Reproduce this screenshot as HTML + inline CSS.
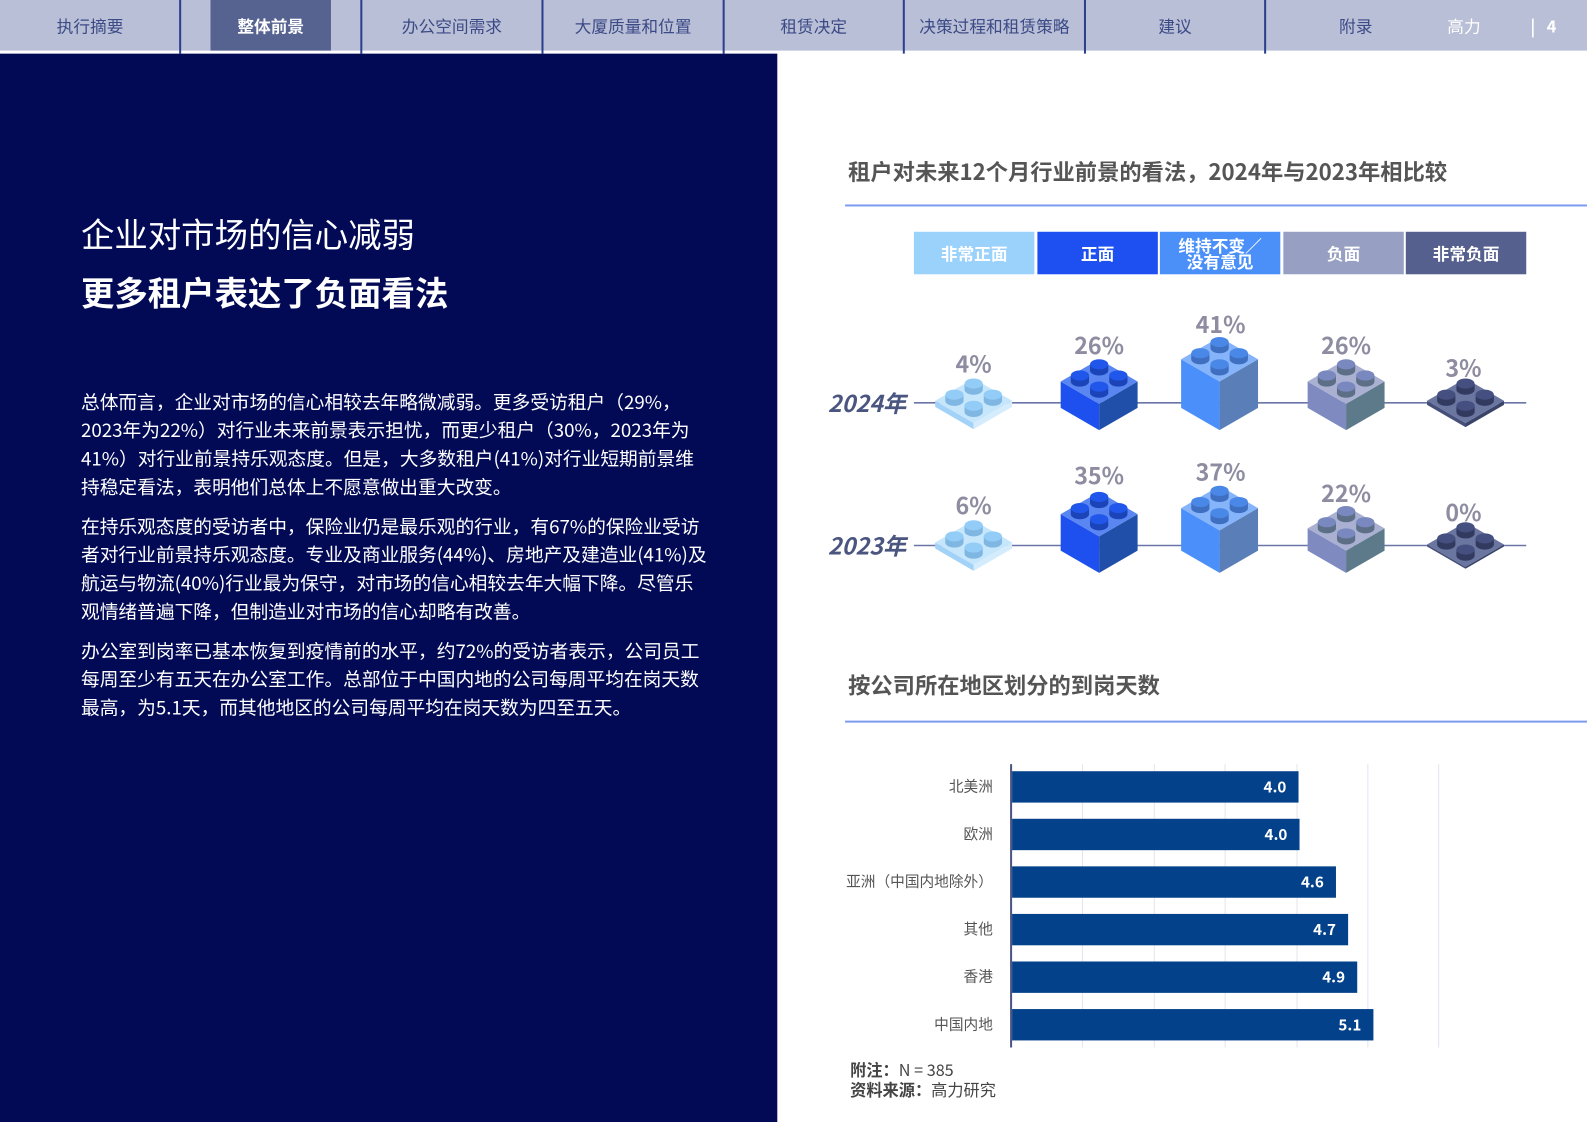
<!DOCTYPE html>
<html><head><meta charset="utf-8"><style>
*{margin:0;padding:0;box-sizing:border-box}
html,body{width:1587px;height:1122px;overflow:hidden;background:#fff}
#w{position:absolute;left:0;top:0;width:1568px;height:1109px;transform:scale(1.0121);transform-origin:0 0;font-family:"Noto Sans CJK SC","Liberation Sans",sans-serif}
.nav{position:absolute;left:0;top:0;width:1568px;height:50px;background:#b9bfd6}
.tab{position:absolute;top:0;height:50px;line-height:50px;text-align:center;font-size:16.5px;color:#3c4a86}
.div{position:absolute;top:0;width:2px;height:53px;background:#2c3f8f}
.left{position:absolute;left:0;top:53px;width:768px;height:1056px;background:#020a55;color:#fff}
.abs{position:absolute;white-space:nowrap}
.p{position:absolute;left:80px;font-size:18.5px;line-height:28px;color:#fff;white-space:nowrap}
.leg{position:absolute;top:229px;height:42px;width:119px;color:#fff;font-weight:bold;font-size:16.5px;text-align:center;display:flex;align-items:center;justify-content:center;line-height:16px}
.bar{position:absolute;left:1000px;height:31px;background:#03418a;color:#fff;font-weight:bold;font-size:15px;text-align:right;padding-right:12px;line-height:31px}
.lab{position:absolute;right:587px;font-size:14.5px;color:#555;white-space:nowrap;line-height:20px}
.grid{position:absolute;top:755px;width:1px;height:280px;background:#e2e4ee}
.pct{position:absolute;font-size:23px;font-weight:bold;color:#8e8ca0;transform:translateX(-50%);line-height:28px}
</style></head><body><div id="w">
<div class="nav"></div>
<div class="tab" style="left:0;width:178px">执行摘要</div>
<div class="tab" style="left:208px;width:119px;background:#566390;color:#fff;font-weight:bold">整体前景</div>
<div class="tab" style="left:357px;width:179px">办公空间需求</div>
<div class="tab" style="left:536px;width:179px">大厦质量和位置</div>
<div class="tab" style="left:715px;width:178px">租赁决定</div>
<div class="tab" style="left:893px;width:179px">决策过程和租赁策略</div>
<div class="tab" style="left:1072px;width:178px">建议</div>
<div class="tab" style="left:1250px;width:179px">附录</div>
<div class="tab" style="left:1424px;width:45px;color:#fff">高力</div>
<div class="tab" style="left:1505px;width:40px;color:#fff;font-weight:bold">|&nbsp;&nbsp;&nbsp;4</div>
<div class="div" style="left:177px"></div><div class="div" style="left:356px"></div><div class="div" style="left:535px"></div><div class="div" style="left:714px"></div><div class="div" style="left:892px"></div><div class="div" style="left:1071px"></div><div class="div" style="left:1249px"></div>

<div class="left">
<div class="abs" style="left:80px;top:155px;font-size:33px;line-height:44px">企业对市场的信心减弱</div>
<div class="abs" style="left:80px;top:213px;font-size:33px;line-height:44px;font-weight:bold">更多租户表达了负面看法</div>
</div>
<div class="p" style="top:383px">总体而言，企业对市场的信心相较去年略微减弱。更多受访租户（29%，<br>2023年为22%）对行业未来前景表示担忧，而更少租户（30%，2023年为<br>41%）对行业前景持乐观态度。但是，大多数租户(41%)对行业短期前景维<br>持稳定看法，表明他们总体上不愿意做出重大改变。</div>
<div class="p" style="top:506px">在持乐观态度的受访者中，保险业仍是最乐观的行业，有67%的保险业受访<br>者对行业前景持乐观态度。专业及商业服务(44%)、房地产及建造业(41%)及<br>航运与物流(40%)行业最为保守，对市场的信心相较去年大幅下降。尽管乐<br>观情绪普遍下降，但制造业对市场的信心却略有改善。</div>
<div class="p" style="top:629px">办公室到岗率已基本恢复到疫情前的水平，约72%的受访者表示，公司员工<br>每周至少有五天在办公室工作。总部位于中国内地的公司每周平均在岗天数<br>最高，为5.1天，而其他地区的公司每周平均在岗天数为四至五天。</div>

<div class="abs" style="left:838px;top:154px;font-size:22px;font-weight:bold;color:#555;line-height:30px">租户对未来12个月行业前景的看法，2024年与2023年相比较</div>
<div class="abs" style="left:835px;top:202px;width:733px;height:2px;background:#7c9cf0"></div>
<div class="leg" style="left:903px;background:#9bd2fc">非常正面</div>
<div class="leg" style="left:1025px;background:#1e4ff0">正面</div>
<div class="leg" style="left:1146px;background:#4b90f9">维持不变／<br>没有意见</div>
<div class="leg" style="left:1268px;background:#97a0c2">负面</div>
<div class="leg" style="left:1389px;background:#56608e">非常负面</div>

<div class="abs" style="left:818px;top:382px;font-size:23px;font-style:italic;font-weight:bold;color:#4a5580;line-height:30px">2024年</div>
<div class="abs" style="left:818px;top:523px;font-size:23px;font-style:italic;font-weight:bold;color:#4a5580;line-height:30px">2023年</div>

<svg class="abs" style="left:0;top:0" width="1568" height="1109">
<line x1="903" y1="398" x2="1508" y2="398" stroke="#6a76a8" stroke-width="1.5"/>
<line x1="903" y1="539" x2="1508" y2="539" stroke="#6a76a8" stroke-width="1.5"/>
</svg>
<svg class="abs" style="left:0;top:0" width="1568" height="1109" id="b"></svg>
<script>
var B=document.getElementById('b'),out='';
function brick(cx,cy,h,t,l,r,s,sd){
 var w=38,d=22;
 out+='<polygon points="'+(cx-w)+','+cy+' '+cx+','+(cy+d)+' '+cx+','+(cy+d+h)+' '+(cx-w)+','+(cy+h)+'" fill="'+l+'"/>';
 out+='<polygon points="'+cx+','+(cy+d)+' '+(cx+w)+','+cy+' '+(cx+w)+','+(cy+h)+' '+cx+','+(cy+d+h)+'" fill="'+r+'"/>';
 out+='<polygon points="'+cx+','+(cy-d)+' '+(cx+w)+','+cy+' '+cx+','+(cy+d)+' '+(cx-w)+','+cy+'" fill="'+t+'"/>';
 [[0,-11],[-19,0],[19,0],[0,11]].forEach(function(p){
  var x=cx+p[0],y=cy+p[1];
  out+='<rect x="'+(x-9)+'" y="'+(y-6)+'" width="18" height="6" fill="'+sd+'"/>';
  out+='<ellipse cx="'+x+'" cy="'+y+'" rx="9" ry="5" fill="'+sd+'"/>';
  out+='<ellipse cx="'+x+'" cy="'+(y-6)+'" rx="9" ry="5" fill="'+s+'"/>';
 });
}
var C=[['#c6e6fc','#a2d2f7','#d4ecfc','#92ccf7','#7fb6e2'],['#5a86f2','#1e50f0','#1f4fa8','#2156ea','#1a44b8'],['#86b4fb','#4a8ffa','#5a7eb8','#4a88e8','#3f6fc0'],['#a9b0d2','#7f8ac0','#5c7a8a','#7a88c0','#5c6f86'],['#6a76a0','#454f7a','#3a4468','#454f80','#323a60']];
var X=[962,1086,1205,1330,1448];
var r1=[[396,6],[377,26],[355,48],[377,26],[396,4]];
var r2=[[536,6],[508,36],[502,42],[522,22],[538,2]];
[r1,r2].forEach(function(r){r.forEach(function(v,i){var c=C[i];brick(X[i],v[0],v[1],c[0],c[1],c[2],c[3],c[4]);});});
B.innerHTML=out;
</script>
<div class="pct" style="left:962px;top:344px">4%</div>
<div class="pct" style="left:1086px;top:326px">26%</div>
<div class="pct" style="left:1206px;top:305px">41%</div>
<div class="pct" style="left:1330px;top:326px">26%</div>
<div class="pct" style="left:1446px;top:348px">3%</div>
<div class="pct" style="left:962px;top:484px">6%</div>
<div class="pct" style="left:1086px;top:454px">35%</div>
<div class="pct" style="left:1206px;top:451px">37%</div>
<div class="pct" style="left:1330px;top:472px">22%</div>
<div class="pct" style="left:1446px;top:491px">0%</div>

<div class="abs" style="left:838px;top:661px;font-size:22px;font-weight:bold;color:#555;line-height:30px">按公司所在地区划分的到岗天数</div>
<div class="abs" style="left:835px;top:712px;width:733px;height:2px;background:#7c9cf0"></div>
<div class="grid" style="left:1069px"></div><div class="grid" style="left:1140px"></div><div class="grid" style="left:1210px"></div><div class="grid" style="left:1281px"></div><div class="grid" style="left:1351px"></div><div class="grid" style="left:1421px"></div>
<div class="abs" style="left:998px;top:755px;width:2px;height:280px;background:#4a5580"></div>
<div class="bar" style="top:762px;width:283px">4.0</div>
<div class="bar" style="top:809px;width:284px">4.0</div>
<div class="bar" style="top:856px;width:320px">4.6</div>
<div class="bar" style="top:903px;width:332px">4.7</div>
<div class="bar" style="top:950px;width:341px">4.9</div>
<div class="bar" style="top:997px;width:357px">5.1</div>
<div class="lab" style="top:767px">北美洲</div>
<div class="lab" style="top:814px">欧洲</div>
<div class="lab" style="top:861px">亚洲（中国内地除外）</div>
<div class="lab" style="top:908px">其他</div>
<div class="lab" style="top:955px">香港</div>
<div class="lab" style="top:1002px">中国内地</div>
<div class="abs" style="left:840px;top:1046px;font-size:16px;color:#444;line-height:20px"><b>附注：</b>N = 385<br><b>资料来源：</b>高力研究</div>
</div></body></html>
